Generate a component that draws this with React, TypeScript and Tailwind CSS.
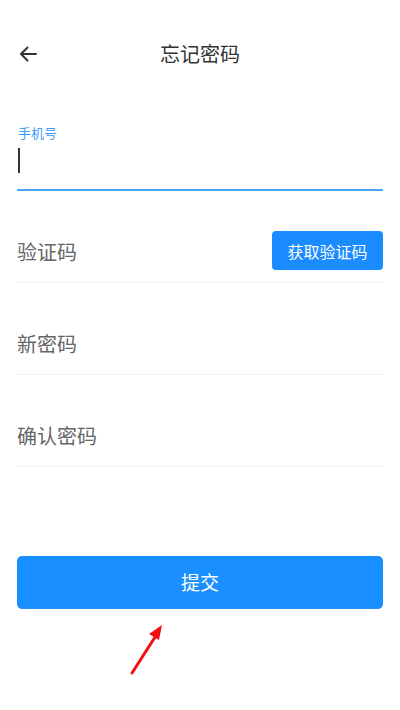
import React from 'react';

const font = { fontFamily: '"Noto Sans CJK SC", "Noto Sans", sans-serif' };

function Row({ label, children }: { label: string; children?: React.ReactNode }) {
  return (
    <div className="h-[92px] flex items-end border-b border-[#f2f3f5] pb-3">
      <div className="h-[39px] w-full flex items-center justify-between">
        <span className="text-[20px] text-[#666666] leading-none mt-[3px]">{label}</span>
        {children}
      </div>
    </div>
  );
}

export default function App() {
  return (
    <div className="w-[400px] h-[710px] bg-white relative overflow-hidden" style={font}>
      <div className="mt-[30px] h-12 relative flex items-center justify-center">
        <svg
          className="absolute left-[19px] top-[15px]"
          width="19"
          height="18"
          viewBox="0 0 19 18"
          fill="none"
          stroke="#333"
          strokeWidth="2"
          strokeLinecap="round"
          strokeLinejoin="round"
        >
          <path d="M17 9H2.5M8.5 2.5L2 9l6.5 6.5" />
        </svg>
        <span className="text-[20px] text-[#333333]">忘记密码</span>
      </div>

      <div className="px-[17px]">
        <div className="pt-[48px] pb-[16px] border-b-2 border-[#48a4f8]">
          <div className="text-[13px] text-[#3d9cf3] leading-none ml-[1px]">手机号</div>
          <div className="mt-[9px] w-[2px] h-[25px] bg-[#333] ml-[1px]" />
        </div>

        <Row label="验证码">
          <button className="w-[111px] h-[39px] rounded-[4px] bg-[#1a8cff] text-white text-[16px]">
            获取验证码
          </button>
        </Row>
        <Row label="新密码" />
        <Row label="确认密码" />

        <button className="mt-[89px] w-full h-[53px] rounded-[5px] bg-[#1a8fff] text-white text-[19px]">
          提交
        </button>
      </div>

      <svg className="absolute left-[125px] top-[618px]" width="45" height="62" viewBox="0 0 45 62">
        <path d="M7 55L32 16" stroke="#f01010" strokeWidth="3" strokeLinecap="round" />
        <path d="M37 7L24 16L34 22Z" fill="#f01010" />
      </svg>
    </div>
  );
}
